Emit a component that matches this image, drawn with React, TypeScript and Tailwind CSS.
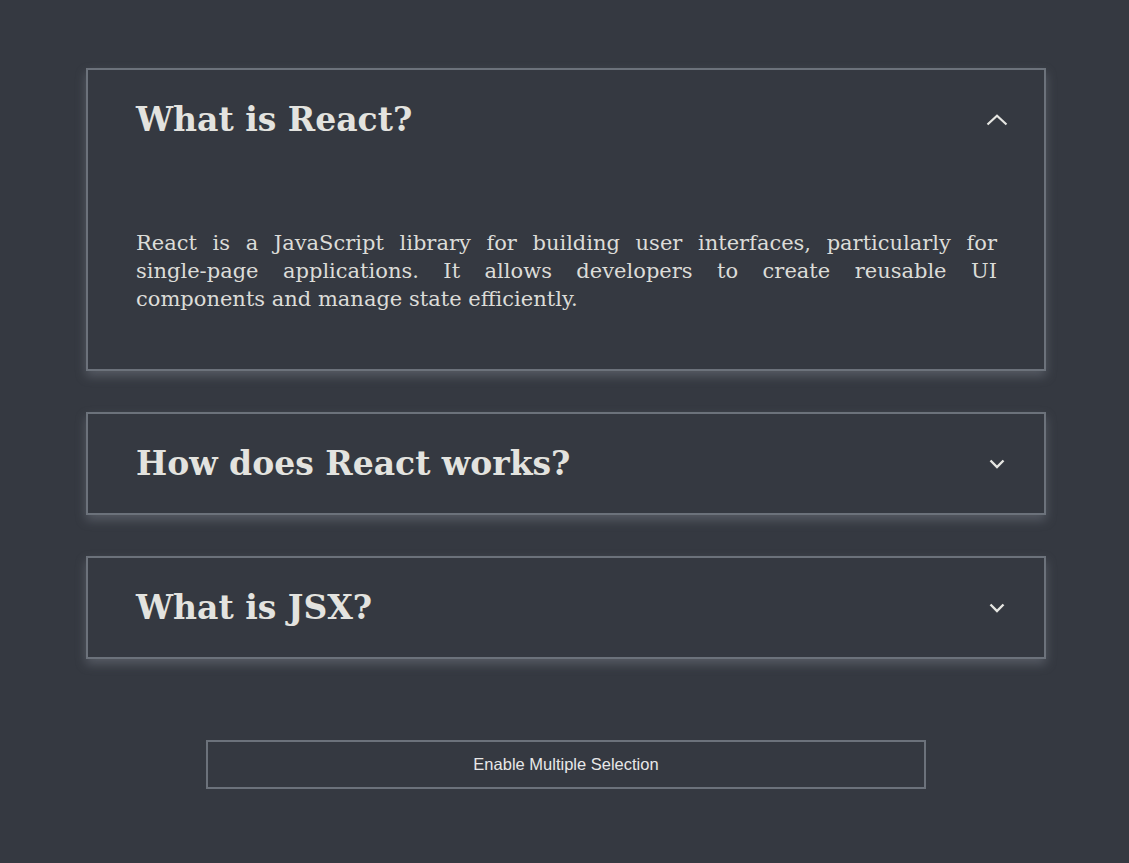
import React, { useState } from 'react';

const items = [
  {
    q: 'What is React?',
    a: [
      'React is a JavaScript library for building user interfaces, particularly for',
      'single-page applications. It allows developers to create reusable UI',
      'components and manage state efficiently.',
    ],
  },
  {
    q: 'How does React works?',
    a: ['React uses a virtual DOM to efficiently update and render components when data changes.'],
  },
  {
    q: 'What is JSX?',
    a: ['JSX is a syntax extension for JavaScript that looks similar to HTML and is used with React.'],
  },
];

const ChevronUp = () => (
  <svg width="22" height="12" viewBox="0 0 22 12" fill="none">
    <path d="M1.5 10.5 L11 1.8 L20.5 10.5" stroke="#e6e6e2" strokeWidth="2.2" />
  </svg>
);

const ChevronDown = () => (
  <svg width="16" height="10" viewBox="0 0 16 10" fill="none">
    <path d="M1.5 1.5 L8 8 L14.5 1.5" stroke="#e6e6e2" strokeWidth="2.4" />
  </svg>
);

const App = () => {
  const [open, setOpen] = useState<number[]>([0]);
  const [multi, setMulti] = useState(false);

  const toggle = (i: number) => {
    if (open.includes(i)) setOpen(open.filter((x) => x !== i));
    else setOpen(multi ? [...open, i] : [i]);
  };

  return (
    <div className="min-h-[863px] bg-[#353941] pt-[68px] pl-[3px] flex flex-col items-center" style={{ fontFamily: '"DejaVu Serif", Georgia, serif' }}>
      <div className="w-[960px] flex flex-col gap-[41px]">
        {items.map((item, i) => {
          const isOpen = open.includes(i);
          return (
            <div key={i} className="border-2 border-[#6c727b] shadow-[0_5px_10px_rgba(150,156,166,0.35)]">
              <button
                onClick={() => toggle(i)}
                className="w-full h-[99px] flex items-center justify-between pl-[48px] pr-[35px] text-left cursor-pointer"
              >
                <h2 className="text-[33px] font-bold text-[#e3e3df]">{item.q}</h2>
                <span className="w-[24px] flex justify-center">{isOpen ? <ChevronUp /> : <ChevronDown />}</span>
              </button>
              {isOpen && (
                <p className="pl-[48px] pr-[47px] pt-[60px] pb-[56px] text-[21px] leading-[28px] text-[#dcdcd8] text-justify">
                  {item.a.map((line, j) => (
                    <span key={j} className={j < item.a.length - 1 ? 'block [text-align-last:justify]' : 'block'}>
                      {line}
                    </span>
                  ))}
                </p>
              )}
            </div>
          );
        })}
      </div>
      <button
        onClick={() => setMulti(!multi)}
        className="mt-[81px] w-[720px] h-[49px] border-2 border-[#6c727b] text-[16.5px] text-[#e8e8e8] cursor-pointer"
        style={{ fontFamily: '"Liberation Sans", Arial, sans-serif' }}
      >
        {multi ? 'Disable Multiple Selection' : 'Enable Multiple Selection'}
      </button>
    </div>
  );
};

export default App;
